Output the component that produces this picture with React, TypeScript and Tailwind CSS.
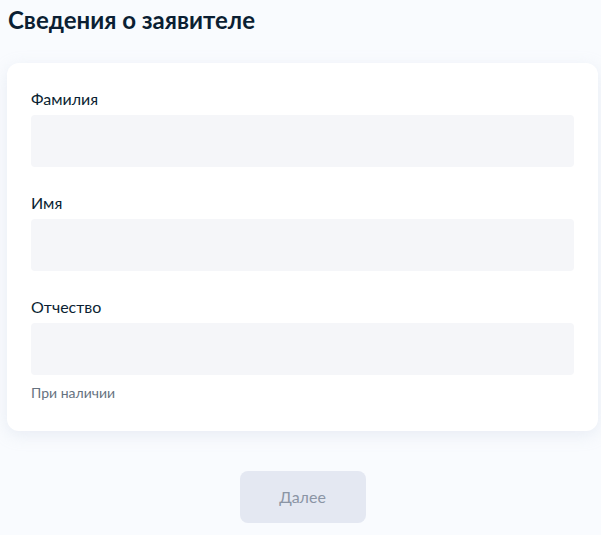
import React from 'react';

const fields = [
  { label: 'Фамилия' },
  { label: 'Имя' },
  { label: 'Отчество', hint: 'При наличии' },
];

const App: React.FC = () => {
  return (
    <div className="min-h-[535px] w-[601px] bg-[#f9fbfe] font-['Lato','Liberation_Sans',sans-serif] text-[#0b1f33]">
      <div className="pl-[7px] pr-[3px] pt-[4px]">
        <h1 className="pl-px text-[24px] leading-[32px] font-bold">Сведения о заявителе</h1>
        <div className="mt-[27px] rounded-[12px] bg-white px-[24px] pt-[24px] pb-[28px] shadow-[0_4px_16px_rgba(185,195,215,0.25)]">
          <div className="flex flex-col gap-[24px]">
            {fields.map((f) => (
              <div key={f.label} className="flex flex-col">
                <label className="text-[16px] leading-[24px] font-normal">{f.label}</label>
                <input className="mt-[4px] h-[52px] rounded-[4px] bg-[#f5f6f9] px-3 outline-none" />
                {f.hint && (
                  <span className="mt-[8px] text-[14px] leading-[20px] text-[#66727f]">{f.hint}</span>
                )}
              </div>
            ))}
          </div>
        </div>
        <div className="mt-[40px] flex justify-center">
          <button className="h-[52px] w-[126px] rounded-[8px] bg-[#e4e8f2] text-[16px] text-[#8b95a5]">
            Далее
          </button>
        </div>
      </div>
    </div>
  );
};

export default App;
